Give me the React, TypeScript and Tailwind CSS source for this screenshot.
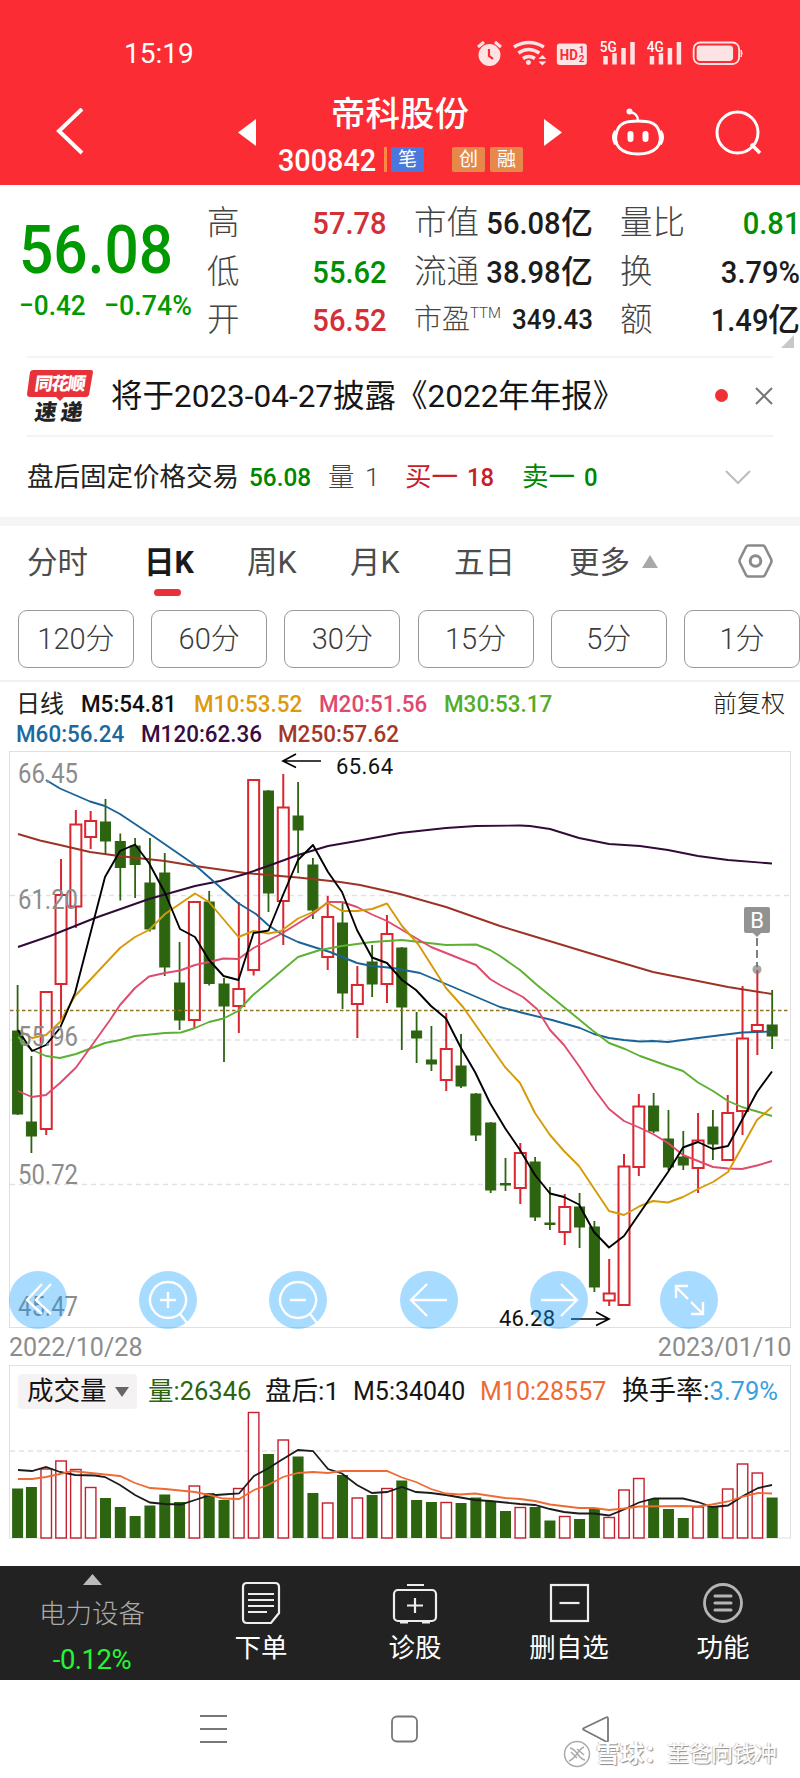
import type { ReactNode } from "react";

type Candle = [up: 0 | 1, high: number, top: number, bottom: number, low: number, volumeTop: number];

const candleX = (i: number) => (i === 0 ? 17.6 : 16.6 + i * 14.815);

// up, high, body top, body bottom, low, top of the volume bar
const candles: Candle[] = [
  [0, 985, 1031, 1114, 1115, 1488.5],
  [0, 1056, 1122, 1136, 1153, 1487],
  [1, 991, 992, 1129, 1135, 1469],
  [1, 859, 895, 984, 1020, 1461],
  [1, 810, 824.5, 906.5, 928, 1469.5],
  [1, 811, 821, 837, 849, 1487.5],
  [0, 799, 822, 841, 854, 1498],
  [0, 833.5, 841.5, 867.5, 900.5, 1507],
  [0, 838, 846, 864.5, 898, 1516],
  [0, 838, 883, 929, 931.5, 1505.5],
  [0, 853, 873, 967, 976, 1494.5],
  [0, 942, 983, 1020, 1030, 1502],
  [1, 901, 902, 1020, 1028, 1486],
  [0, 891, 902, 983.5, 985.5, 1493],
  [0, 978, 984, 1006, 1062, 1500],
  [1, 902, 989, 1006, 1033, 1488.5],
  [1, 779, 780, 970, 975.5, 1412.5],
  [0, 790, 791, 893, 912, 1454],
  [1, 774, 807.5, 901, 945, 1440],
  [0, 782, 816, 830, 873, 1456.5],
  [0, 858, 865, 910, 919, 1493],
  [1, 896, 917, 957, 970, 1503],
  [0, 903, 923, 993, 1009, 1475],
  [1, 966, 985, 1004, 1038, 1498],
  [0, 945, 962, 984, 997, 1495],
  [1, 915, 934, 984, 1003, 1488.5],
  [0, 947, 948, 1007, 1050, 1480.5],
  [0, 1012, 1031, 1038, 1063, 1500],
  [0, 1026, 1060, 1064, 1071, 1502],
  [1, 1013, 1049, 1080, 1091, 1502.5],
  [0, 1034, 1066, 1086, 1088, 1503],
  [0, 1093, 1094, 1135, 1141, 1497.5],
  [0, 1122, 1123, 1190, 1193, 1501],
  [0, 1158, 1183.5, 1185, 1191, 1511],
  [1, 1143, 1153, 1188, 1204, 1507.5],
  [0, 1157, 1162, 1217, 1221, 1507],
  [0, 1187, 1223, 1224.5, 1230, 1520.5],
  [1, 1194, 1207, 1232, 1245, 1516.5],
  [0, 1193, 1207, 1227, 1248, 1519],
  [0, 1221, 1227, 1287, 1292, 1509],
  [1, 1259, 1293.5, 1300.5, 1306, 1517.5],
  [1, 1154, 1166.5, 1305, 1305, 1490],
  [1, 1094, 1106.5, 1167, 1176, 1478.5],
  [0, 1093, 1106, 1131, 1133, 1499],
  [0, 1110, 1139, 1167, 1170, 1509],
  [0, 1131, 1157, 1165, 1170, 1518],
  [1, 1113, 1140.5, 1168, 1193, 1507],
  [0, 1110, 1127, 1144, 1160, 1506],
  [1, 1095, 1113, 1160, 1161, 1489],
  [1, 986, 1038.5, 1111, 1135, 1464],
  [1, 970, 1025, 1031, 1055, 1473],
  [0, 990, 1025, 1036, 1049, 1497.5],
];

const averages = [
  { color: "#9c3324", points: "18,834 40,840.5 60,845 90,852 119,856 165,861 195,866 245,873 268,875 298,877.5 340,882 360,885 387,891 400,894 446,907 500,926 523,933 579,950 609,959 653,972 698,981 728,987 772,994" },
  { color: "#310a38", points: "18,947 50,936 95,918 149,899 195,886 220,881 245,874 268,866 298,855 328,846 357,841 400,833 446,828 476,826 520,825.5 530,826 550,829 579,838 609,844 640,846 668,850 698,856 728,860 772,863.5" },
  { color: "#1a6399", points: "46,780 60,788.5 90,801.5 105,806 120,814 150,834 195,865 238,903 256,914 268,925 283,935 298,942 320,949 330,952 357,963 372,966 393,968 420,973 446,984 500,1007 523,1013 552,1020 580,1028 594,1034 609,1038 624,1040 640,1041.5 653,1041 668,1042 698,1038 742,1032.5 772,1031.5" },
  { color: "#5cb032", points: "18,1037 32,1050 46,1056 60,1058 76,1054 105,1043 120,1040 135,1036 165,1033 181,1032.5 195,1028 209,1022 223.5,1018.5 238,1011 253,995 298,957 320,950 342,946 372,942 402,940 420,942 446,945 476,944.5 490,950 500,956 520,970 537,985 570,1012 592,1030 609,1043 625,1049 640,1056 668,1066 683,1071 698,1082.5 713,1091 728,1101 742,1107 757,1111.5 772,1116" },
  { color: "#e04a6c", points: "18,1091 32,1097 46,1095 60,1083 76,1067.5 110,1020 120,1005 135,988 149,976.5 165,973 180,970.5 195,965 209,962 223.5,958.5 238.5,959 253.5,948 281,934 313,914 328,902 342,902 357,907 372,914.5 387,921 431,947 476,965 490,979 500,985 523,997 537,1009 550,1030 564,1045 579,1066 594,1089 609,1109 624,1121 638,1127 653,1134 668,1143 683,1155 698,1161 713,1167 728,1168.5 742,1169 757,1165.5 772,1161" },
  { color: "#d69a08", points: "18,1030 32,1038 46,1035 60,1022 75,996 120,948 135,937 149,930 165,914 195,893.5 209,902 238.5,937 253.5,931 268.5,933.5 281,931 298,918.5 313,912 328,903 342,911 357,911 372,909 387,903.5 402,926 418,944 446,988 463,1007 505,1067 520,1083 535,1113 550,1135 564,1151 579,1166 609,1211 624,1215 640,1206 653,1201 668,1202.5 683,1197 698,1189 713,1182 728,1172 757,1120 772,1107" },
  { color: "#000000", points: "18,1030 32,1051 46,1045 60,1028 75,993 90,935 105,877 120,851 135,844.5 149,863 165,893 180,929 195,937 209,960 223.5,976 238.5,980 253.5,933 268.5,930.5 283,895 298,860 313,845 328,872 342,892 357,930 372,957.5 387,963 402,980 416,990 431,1006 446,1018.5 461,1048 475,1072 490,1103 505,1128 520,1150 535,1175 550,1193.5 564,1197 579,1204.5 594,1232 609,1247.5 624,1236 668,1172 683,1147.5 698,1142 713,1149 728,1146 742,1120 757,1092 772,1071.5" },
];

const volumeAverages = [
  { color: "#1c1c1c", points: "18,1470 32,1471 46,1467 60,1472 75,1475 95,1475.5 105,1477 120,1485 135,1495 150,1502.5 165,1504 181,1504.5 195,1500 209,1495.5 223,1494.5 239,1493.5 254,1476 268,1468.5 283,1459 298,1450 313,1451 328,1469 342,1473.5 357,1485 372,1493 387,1492 402,1487 416,1492 431,1493 446,1495 475,1500 490,1501 520,1504 535,1505 550,1509 564,1512 579,1513.5 594,1513.5 609,1515.5 624,1509.5 639,1502.5 654,1498.5 683,1498.5 698,1502 712,1507 728,1505.5 743,1496 758,1488 772,1485" },
  { color: "#ee6b33", points: "18,1479 32,1479 46,1477 60,1474 72,1471 105,1474.5 120,1476 135,1483 150,1488 165,1489 195,1492 209,1495 223,1498.5 239,1499 254,1490 268,1485 283,1477 298,1473 313,1472 328,1473 342,1471 387,1471 402,1477.5 416,1482 431,1489 446,1493.5 460,1494.5 475,1493.5 505,1498 520,1499 535,1501 550,1504.5 579,1508 594,1508 609,1510 624,1508.5 639,1506.5 683,1506 698,1506.5 712,1504.5 728,1501.5 743,1496.5 758,1493 772,1493.5" },
];

const StatusBar = () => {
  return (
    <div className="flex h-[108px] items-center pl-[124px] pr-[57px] text-white">
      <span className="w-[354px] text-[28px] leading-none">15:19</span>
      <svg className="h-7 w-[266px]" viewBox="477 40 266 28" fill="none">
        <g fill="#fff" opacity="0.87">
          <circle cx="489.5" cy="55" r="11" />
          <path d="M478 47l6-5M501 47l-6-5" stroke="#fff" strokeWidth="3" />
          <path d="M489 49v7l4 3" stroke="#fb2c33" strokeWidth="2.2" fill="none" />
          <path d="M514 47q15-9 30 0M518.500 53q10-7 21 0M523 58.500q6-4 12 0" stroke="#fff" strokeWidth="3.600" fill="none" />
          <circle cx="528.500" cy="62.500" r="2.500" />
          <path d="M538.500 59l4-4 4 4zM538.500 61.500l4 4 4-4z" />
          <rect x="557" y="43.500" width="30" height="21.500" rx="3" />
          <path d="M603.500 56h4.500v8.500h-4.500zM612.500 53h4.500v11.500h-4.500zM621.500 48h4.500v16.500h-4.500zM630.500 42h4.500v22.500h-4.500z" />
          <path d="M650 56h4.500v8.500h-4.500zM659 53h4.500v11.500h-4.500zM668 48h4.500v16.500h-4.500zM677 42h4.500v22.500h-4.500z" />
          <rect x="697" y="45.500" width="36.500" height="15.500" rx="3.500" />
          <path d="M741.500 50q2 3 0 7z" stroke="#fff" />
          <rect x="694" y="42.500" width="45.500" height="21.500" rx="6.500" fill="none" stroke="#fff" strokeWidth="1.800" />
        </g>
        <g fontFamily="Roboto, sans-serif" fontWeight="700">
          <text x="560" y="60" fontSize="15.500" textLength="18" lengthAdjust="spacingAndGlyphs" fill="#fb2c33">HD</text>
          <text x="579" y="53.500" fontSize="10" fill="#fb2c33">1</text>
          <text x="579" y="62" fontSize="10" fill="#fb2c33">2</text>
          <text x="600" y="52" fontSize="15" fontWeight="500" textLength="17" lengthAdjust="spacingAndGlyphs" fill="#fff">5G</text>
          <text x="647" y="52" fontSize="15" fontWeight="500" textLength="17" lengthAdjust="spacingAndGlyphs" fill="#fff">4G</text>
        </g>
      </svg>
    </div>
  );
};

const Tag = ({ children, className }: { children: ReactNode; className: string }) => (
  <span className={`flex h-[25px] w-[33px] items-center justify-center rounded-[2px] text-[19px] leading-none ${className}`}>{children}</span>
);

const TitleBar = () => {
  return (
    <div className="flex h-[77px] items-start text-white">
      <svg className="ml-[56px] h-[48px] w-7" viewBox="0 0 28 48" fill="none" stroke="#fff" strokeWidth="4">
        <path d="M26 1L3 23l23 22" />
      </svg>
      <svg className="ml-[154px] mt-[11px] h-7 w-[18px]" viewBox="0 0 18 28" fill="#fff">
        <path d="M18 0v27L0 13.500z" />
      </svg>
      <div className="ml-[22px] flex w-[266px] flex-col">
        <div className="mt-[-14px] h-[49px] pl-[53px] text-[34.5px] font-medium leading-[40px]">帝科股份</div>
        <div className="flex h-[33px] items-center">
          <span className="w-[106px] shrink-0 origin-left scale-x-90 text-[32px] font-medium leading-none">300842</span>
          <span className="h-[25px] w-[3px] bg-[#ff8940]"></span>
          <Tag className="ml-[4px] bg-[#4a78dc]">笔</Tag>
          <Tag className="ml-[28px] bg-[#e5884a]">创</Tag>
          <Tag className="ml-[5px] bg-[#e5884a]">融</Tag>
        </div>
      </div>
      <svg className="mt-[11px] h-7 w-[18px]" viewBox="0 0 18 28" fill="#fff">
        <path d="M0 0v27l18-13.500z" />
      </svg>
      <svg className="ml-[49px] h-[50px] w-[54px]" viewBox="0 0 54 50" fill="none" stroke="#fff" strokeWidth="3">
        <path d="M6 23C9 14 17 13 27 13s18 1 21 10c5 14-4 23-21 23S1 37 6 23z" />
        <path d="M27 13c0-6-3-8-8-9" strokeWidth="2.500" />
        <circle cx="18.500" cy="3.500" r="3" fill="#fff" stroke="none" />
        <path d="M5 23q-4 6 0 13M49 23q4 6 0 13" strokeWidth="4" />
        <path d="M19.500 26v5M34.500 26v5" strokeWidth="6" strokeLinecap="round" />
      </svg>
      <svg className="ml-[50px] mt-[2px] h-[46px] w-[48px]" viewBox="0 0 48 46" fill="none" stroke="#fff" strokeWidth="3">
        <circle cx="22.500" cy="22.500" r="20.500" />
        <path d="M36 34l9 9" strokeWidth="3.500" />
      </svg>
    </div>
  );
};

const QuoteRow = ({ label, value, unit, className }: { label: ReactNode; value: string; unit?: string; className: string }) => (
  <div className="flex h-[48.5px] items-center justify-between whitespace-nowrap">
    <span className="font-light text-[#444]">{label}</span>
    <span className={`flex font-medium ${className}`}>
      <span className="origin-right scale-x-[0.91]">{value}</span>
      {unit && <span>{unit}</span>}
    </span>
  </div>
);

const Quote = () => {
  return (
    <div className="relative flex h-[171px] pt-[14px] text-[32.5px] leading-none">
      <div className="w-[207px] pl-[19px] font-medium text-[#009a00]">
        <div className="mt-[17px] w-[180px] origin-left scale-x-[0.915] text-[66px] leading-[70px]">56.08</div>
        <div className="mt-[6px] flex text-[28.5px]">
          <span className="w-[85px] origin-left scale-x-[0.92]">−0.42</span>
          <span className="origin-left scale-x-[0.94]">−0.74%</span>
        </div>
      </div>
      <div className="w-[180px]">
        <QuoteRow label="高" value="57.78" className="text-[32px] text-[#d32f38]" />
        <QuoteRow label="低" value="55.62" className="text-[32px] text-[#008f00]" />
        <QuoteRow label="开" value="56.52" className="text-[32px] text-[#d32f38]" />
      </div>
      <div className="ml-[27px] w-[179px]">
        <QuoteRow label="市值" value="56.08" unit="亿" className="text-[32px] text-[#1c1c1c]" />
        <QuoteRow label="流通" value="38.98" unit="亿" className="text-[32px] text-[#1c1c1c]" />
        <QuoteRow
          label={<span className="flex text-[28px]">市盈<span className="text-[15px]">TTM</span></span>}
          value="349.43"
          className="text-[28.5px] text-[#1c1c1c]"
        />
      </div>
      <div className="ml-[27px] w-[180px]">
        <QuoteRow label="量比" value="0.81" className="text-[32px] text-[#008f00]" />
        <QuoteRow label="换" value="3.79%" className="text-[32px] text-[#1c1c1c]" />
        <QuoteRow label="额" value="1.49" unit="亿" className="text-[32px] text-[#1c1c1c]" />
      </div>
      <svg className="absolute right-[6px] top-[150px] size-[13px]" viewBox="0 0 13 13" fill="#c8c8c8">
        <path d="M13 0v13H0z" />
      </svg>
    </div>
  );
};

const News = () => {
  return (
    <div className="mx-[27px] flex h-[81px] items-center border-y-2 border-[#f4f4f4]">
      <svg className="h-[56px] w-[67px] shrink-0" viewBox="0 0 67 56">
        <path d="M6 1h58q2 0 2 2l-4 23q-1 2-3 2H37l-4 4-4-4H3q-3 0-3-3L3 3q1-2 3-2z" fill="#e8323a" />
        <g fontFamily="'Noto Sans CJK SC', sans-serif" fontWeight="900" transform="skewX(-8)">
          <text x="10" y="21.500" fontSize="18" textLength="51" fill="#fff">同花顺</text>
          <text x="14" y="51" fontSize="22" textLength="48" fill="#222">速递</text>
        </g>
      </svg>
      <span className="ml-[17px] w-[604px] shrink-0 whitespace-nowrap text-[31.5px] leading-none text-[#151515]">将于2023-04-27披露《2022年年报》</span>
      <span className="mt-[-2px] size-[13px] shrink-0 rounded-full bg-[#ef3136]"></span>
      <svg className="ml-auto mt-[-2px] size-[18px]" viewBox="0 0 18 18" stroke="#777" strokeWidth="2">
        <path d="M1 1l16 16M17 1L1 17" />
      </svg>
    </div>
  );
};

const AfterHours = () => {
  return (
    <div className="flex h-[80px] items-center whitespace-nowrap pl-[27px] text-[26.5px] leading-none">
      <span className="w-[222px] text-[#222]">盘后固定价格交易</span>
      <span className="w-[79px] origin-left scale-x-[0.92] font-medium text-[#008600]">56.08</span>
      <span className="w-[77px] font-light text-[#444]">量 <span className="ml-1">1</span></span>
      <span className="flex w-[117px] gap-[9px] text-[#c82029]">买一 <b className="origin-left scale-x-90 font-medium">18</b></span>
      <span className="flex w-[203px] gap-[9px] text-[#008600]">卖一 <b className="origin-left scale-x-90 font-medium">0</b></span>
      <svg className="h-[15px] w-[26px]" viewBox="0 0 26 15" fill="none" stroke="#bcbcbc" strokeWidth="2">
        <path d="M1 1l12 12L25 1" />
      </svg>
    </div>
  );
};

const periods = ["120分", "60分", "30分", "15分", "5分", "1分"];

const Tabs = () => {
  return (
    <div className="border-t-[9px] border-[#f5f5f5]">
      <div className="relative flex h-[82.5px] items-center whitespace-nowrap pb-[9px] pl-[27px] text-[30.5px] leading-none text-[#4c4c4c]">
        <span className="w-[117px]">分时</span>
        <span className="w-[103px] font-bold text-[#1a1a1a]">日K</span>
        <span className="w-[103px]">周K</span>
        <span className="w-[104px]">月K</span>
        <span className="w-[115px]">五日</span>
        <span className="w-[73px]">更多</span>
        <svg className="mt-[-3px] h-[13px] w-4" viewBox="0 0 16 13" fill="#a9a9a9">
          <path d="M8 0l8 13H0z" />
        </svg>
        <svg className="ml-[80px] mt-[-3px] h-[34px] w-[35px]" viewBox="0 0 35 34" fill="none" stroke="#8a8a8a" strokeWidth="2.600" strokeLinejoin="round">
          <path d="M10 1.500h15q1 0 2 1.500l6 12q1 2 0 4l-6 12q-1 1.500-2 1.500H10q-1 0-2-1.500L2 19q-1-2 0-4L8 3q1-1.500 2-1.500z" />
          <circle cx="17.500" cy="17" r="5.300" strokeWidth="3" />
        </svg>
        <span className="absolute left-[154px] top-[63px] h-[7px] w-[27px] rounded-full bg-[#e8323a]"></span>
      </div>
      <div className="flex h-[73.5px] gap-[17.200px] border-b-2 border-[#f1f1f1] pl-[18px]">
        {periods.map((period) => (
          <div key={period} className="mt-[1px] flex h-[58px] w-[116px] shrink-0 items-center justify-center rounded-[9px] border border-[#999] pt-[2px] text-[29px] font-light leading-none text-[#3c3c3c]">
            {period}
          </div>
        ))}
      </div>
    </div>
  );
};

const MA = "shrink-0 origin-left scale-x-[0.935]";

const Legend = () => {
  return (
    <div className="h-[69px] whitespace-nowrap pl-[16px] pt-[7px] text-[24px] font-medium leading-[30px]">
      <div className="flex">
        <span className="w-[65px] font-normal text-[#222]">日线</span>
        <span className={`${MA} w-[113px] text-[#111]`}>M5:54.81</span>
        <span className={`${MA} w-[125px] text-[#dc9a0e]`}>M10:53.52</span>
        <span className={`${MA} w-[125px] text-[#e0486f]`}>M20:51.56</span>
        <span className={`${MA} w-[269px] text-[#52ac2b]`}>M30:53.17</span>
        <span className="font-light text-[#222]">前复权</span>
      </div>
      <div className="flex">
        <span className={`${MA} w-[125px] text-[#1d689f]`}>M60:56.24</span>
        <span className={`${MA} w-[137px] text-[#380c42]`}>M120:62.36</span>
        <span className={`${MA} text-[#a2382a]`}>M250:57.62</span>
      </div>
    </div>
  );
};

const GridLine = ({ y }: { y: number }) => <path d={`M10 ${y}H790`} stroke="#e2e2e2" strokeWidth="1.300" strokeDasharray="5 4" />;

const PriceChart = () => {
  return (
    <svg className="block h-[577px] w-full overflow-visible" viewBox="0 751 800 577" fill="none">
      <rect x="9.500" y="751.500" width="781" height="576" stroke="#e0e0e0" />
      <GridLine y={895.5} />
      <GridLine y={1040} />
      <GridLine y={1184.5} />
      {candles.map(([up, high, top, bottom, low], i) => {
        const x = candleX(i);
        return up ? (
          <g key={i} stroke="#d9262f" strokeWidth="2">
            <path d={`M${x} ${high}V${top}M${x} ${bottom}V${low}`} />
            <rect x={x - 5.5} y={top} width="11" height={bottom - top} />
          </g>
        ) : (
          <g key={i} fill="#2c6410" stroke="#2c6410">
            <path d={`M${x} ${high}V${low}`} strokeWidth="1.800" />
            <rect x={x - 5} y={top} width="10" height={bottom - top} />
          </g>
        );
      })}
      <path d="M10 1010.500H790" stroke="#8f7423" strokeWidth="1.300" strokeDasharray="3.500 2.500" />
      {averages.map(({ color, points }) => (
        <polyline key={color} points={points} stroke={color} strokeWidth="1.900" strokeLinejoin="round" />
      ))}
      <g fontFamily="Roboto, sans-serif" fontSize="27" fill="#8c8c8c">
        <text x="18" y="783" textLength="60" lengthAdjust="spacingAndGlyphs">66.45</text>
        <text x="18" y="908.500" textLength="60" lengthAdjust="spacingAndGlyphs">61.20</text>
        <text x="18" y="1046" textLength="60" lengthAdjust="spacingAndGlyphs">55.96</text>
        <text x="18" y="1184" textLength="60" lengthAdjust="spacingAndGlyphs">50.72</text>
        <text x="18" y="1316" textLength="60" lengthAdjust="spacingAndGlyphs">45.47</text>
      </g>
      <g fontFamily="Roboto, sans-serif" fontSize="22" fill="#111">
        <text x="336" y="774" textLength="57">65.64</text>
        <text x="499" y="1325.500" textLength="56">46.28</text>
      </g>
      <g stroke="#000" strokeWidth="1.700">
        <path d="M321 761h-38M296 754l-13 7 13 6.500" />
        <path d="M571 1319h37M596 1312l13 7-13 6.500" />
      </g>
      {/* buy marker */}
      <path d="M746 907h22q2 0 2 2v22q0 2-2 2h-7l-4 4-4-4h-7q-2 0-2-2v-22q0-2 2-2z" fill="#929292" />
      <text x="757" y="928" textAnchor="middle" fontFamily="Roboto, sans-serif" fontSize="22" fill="#fff">B</text>
      <path d="M757 938v29" stroke="#555" strokeWidth="1.500" strokeDasharray="8 4" />
      <circle cx="757" cy="969.500" r="4.500" fill="#777" fillOpacity="0.650" />
    </svg>
  );
};

const tools = [
  "M33 13L18 29l15 14M42 13L27 29l15 14",
  "M29 11a18 18 0 1 0 0.100 0M41 43l7 9M29 21v16M21 29h16",
  "M29 11a18 18 0 1 0 0.100 0M41 43l7 9M21 29h16",
  "M47 29H11M27 13L11 29l16 16",
  "M11 29h36M31 13l16 16-16 16",
  "M28 28L16 16M16 27V15h12M31 31l12 12M43 31v12H31",
];

const ChartTools = () => {
  return (
    <div className="absolute left-[9px] top-[520px] flex gap-[72.200px]">
      {tools.map((d) => (
        <div key={d} className="size-[58px] rounded-full bg-[#0c9bff]/36">
          <svg viewBox="0 0 58 58" fill="none" stroke="#fff" strokeWidth="2.400">
            <path d={d} />
          </svg>
        </div>
      ))}
    </div>
  );
};

const Volume = () => {
  return (
    <div className="relative h-[201px]">
      <svg className="block h-[175px] w-full" viewBox="0 1365 800 175" fill="none">
        <rect x="9.500" y="1365.500" width="781" height="172.500" stroke="#e0e0e0" />
        <GridLine y={1451} />
        {candles.map(([up, , , , , top], i) => {
          const x = candleX(i);
          return up ? (
            <rect key={i} x={x - 5.25} y={top} width="10.500" height={1538 - top} fill="#fff" stroke="#c4202d" strokeWidth="1.400" />
          ) : (
            <rect key={i} x={x - 5.5} y={top} width="11" height={1538 - top} fill="#2c6410" />
          );
        })}
        {volumeAverages.map(({ color, points }) => (
          <polyline key={color} points={points} stroke={color} strokeWidth="1.800" />
        ))}
      </svg>
      <div className="absolute left-[18px] top-[9px] flex h-[35px] items-center whitespace-nowrap text-[25.5px] leading-none text-[#151515]">
        <div className="flex h-full w-[119px] items-center gap-[8px] rounded-[4px] bg-[#f5f2f3] pl-[9px] text-[26.5px]">
          成交量
          <svg className="h-[10px] w-[14px]" viewBox="0 0 14 10" fill="#666"><path d="M0 0h14L7 10z" /></svg>
        </div>
        <span className="ml-[11px] w-[117px] text-[#2c6410]">量:26346</span>
        <span className="w-[88px] text-[26.500px]">盘后:1</span>
        <span className="w-[127px] text-[25px]">M5:34040</span>
        <span className="w-[142px] text-[25px] text-[#ee6b33]">M10:28557</span>
        <span className="text-[27px]">换手率:</span>
        <span className="text-[#37a0df]">3.79%</span>
      </div>
    </div>
  );
};

const BottomItem = ({ label, children }: { label: string; children: ReactNode }) => (
  <div className="flex w-[154px] flex-col items-center pt-[15px]">
    <svg className="h-[44px] w-[46px]" viewBox="0 0 46 44" fill="none" stroke="#eee" strokeWidth="2.200">
      {children}
    </svg>
    <span className="mt-[10px] text-[26.5px] leading-none text-white">{label}</span>
  </div>
);

const BottomBar = () => {
  return (
    <div className="flex h-[114px] bg-[#222]">
      <div className="flex w-[184px] flex-col items-center pt-[8px] leading-none">
        <svg className="h-[11px] w-[19px]" viewBox="0 0 19 11" fill="#bbb"><path d="M9.500 0L19 11H0z" /></svg>
        <span className="mt-[16px] text-[26.5px] font-light text-[#aaa]">电力设备</span>
        <span className="mt-[18px] text-[27.5px] tracking-[-0.5px] text-[#25f535]">-0.12%</span>
      </div>
      <BottomItem label="下单">
        <path d="M9 2h28q4 0 4 4v26l-8 10H9q-4 0-4-4V6q0-4 4-4z" />
        <path d="M10 13h26M10 19h26M10 25h26M10 31h19" />
      </BottomItem>
      <BottomItem label="诊股">
        <rect x="2" y="9" width="42" height="31" rx="4" />
        <path d="M15 4h17M23 17v15M15 24.500h16" />
        <path d="M8 41h8M30 41h8" strokeWidth="3" />
      </BottomItem>
      <BottomItem label="删自选">
        <rect x="5" y="4" width="37" height="36" />
        <path d="M13.500 22h20" />
      </BottomItem>
      <BottomItem label="功能">
        <circle cx="23" cy="22" r="18.500" stroke="#b5b5b5" strokeWidth="2.800" />
        <path d="M15 15h16M15 22h16M15 29h16" stroke="#b5b5b5" strokeWidth="3" strokeLinecap="round" />
      </BottomItem>
    </div>
  );
};

const SystemNav = () => {
  return (
    <div className="relative h-[98px]">
      <svg className="block h-full w-full" viewBox="0 1680 800 98" fill="none" stroke="#777" strokeWidth="1.800">
        <path d="M200 1716h27M200 1729h27M200 1742h27" />
        <rect x="392" y="1716.500" width="25" height="25" rx="5" />
        <path d="M606 1717.500l-22 10.500q-2 1 0 2l22 11.500q2 1 2-1v-22q0-2-2-1z" />
      </svg>
      <div className="absolute left-[563px] top-[60px] flex items-center whitespace-nowrap text-[22px] leading-[28px] text-white [text-shadow:1px_1px_1px_#888,-1px_0_1px_#ccc]">
        <svg className="size-7" viewBox="0 0 28 28" fill="none" stroke="#aaa" strokeWidth="1.500">
          <circle cx="14" cy="14" r="12.500" />
          <path d="M7 8c7 1 8 11 15 12M21 7c-6 2-8 12-15 14M8 12l6 6M14 9l7 6" />
        </svg>
        <span className="ml-[5px] w-[71px] text-[24px] font-bold">雪球：</span>
        <span>茥爸向钱冲</span>
      </div>
    </div>
  );
};

const App = () => {
  return (
    <div className="h-[1778px] w-[800px] overflow-hidden bg-white font-[Roboto,'Noto_Sans_CJK_SC',sans-serif]">
      <div className="h-[185px] bg-[#fb2c33]">
        <StatusBar />
        <TitleBar />
      </div>
      <Quote />
      <News />
      <AfterHours />
      <Tabs />
      <Legend />
      <div className="relative">
        <PriceChart />
        <ChartTools />
        <div className="flex h-[37px] items-center justify-between px-[9px] pt-[1px] text-[26px] leading-none text-[#8c8c8c]">
          <span className="origin-left scale-x-[0.965]">2022/10/28</span>
          <span className="origin-right scale-x-[0.965]">2023/01/10</span>
        </div>
      </div>
      <Volume />
      <BottomBar />
      <SystemNav />
    </div>
  );
};

export default App;
